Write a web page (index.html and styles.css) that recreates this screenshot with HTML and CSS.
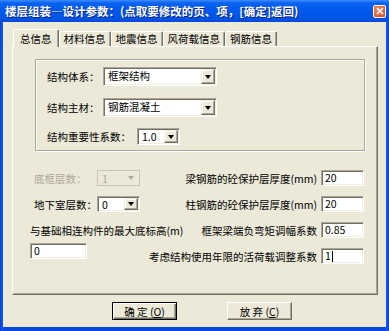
FILE: index.html
```html
<!DOCTYPE html>
<html lang="zh-CN">
  <head>
    <meta charset="UTF-8" />
    <title>楼层组装—设计参数</title>
    <link rel="stylesheet" href="styles.css">
  </head>
  <body>
    <div id="window">
      <div id="titlebar">
        <span id="title">楼层组装—设计参数：(点取要修改的页、项，[确定]返回)</span>
        <span id="close">
          <svg width="8" height="8" viewBox="0 0 8 8">
            <path d="M1 1L7 7M7 1L1 7" stroke="#fff" stroke-width="1.7" />
          </svg>
        </span>
      </div>
      <div id="client">
        <div id="tabs">
          <div class="tab active">总信息</div>
          <div class="tab">材料信息</div>
          <div class="tab">地震信息</div>
          <div class="tab">风荷载信息</div>
          <div class="tab">钢筋信息</div>
        </div>
        <div id="page">
          <div id="group">
            <div class="row">
              <label>结构体系：</label>
              <div class="combo wide"><span class="value">框架结构</span><span class="arrow"></span></div>
            </div>
            <div class="row">
              <label>结构主材：</label>
              <div class="combo wide"><span class="value">钢筋混凝土</span><span class="arrow"></span></div>
            </div>
            <div class="row short">
              <label class="long">结构重要性系数：</label>
              <div class="combo small"><span class="value">1.0</span><span class="arrow"></span></div>
            </div>
          </div>
          <div id="lower">
            <div id="left">
              <div class="lrow">
                <label class="disabled">底框层数：</label>
                <div class="combo small disabled"><span class="value">1</span><span class="arrow"></span></div>
              </div>
              <div class="lrow">
                <label>地下室层数：</label>
                <div class="combo small"><span class="value">0</span><span class="arrow"></span></div>
              </div>
              <div class="lrow outdent">
                <label>与基础相连构件的最大底标高(m)</label>
              </div>
              <div class="edit base">0</div>
            </div>
            <div id="right">
              <div class="rrow">
                <label>梁钢筋的砼保护层厚度(mm)</label>
                <div class="edit">20</div>
              </div>
              <div class="rrow">
                <label>柱钢筋的砼保护层厚度(mm)</label>
                <div class="edit">20</div>
              </div>
              <div class="rrow">
                <label>框架梁端负弯矩调幅系数</label>
                <div class="edit">0.85</div>
              </div>
              <div class="rrow">
                <label>考虑结构使用年限的活荷载调整系数</label>
                <div class="edit">1<span class="caret"></span></div>
              </div>
            </div>
          </div>
        </div>
        <div id="buttons">
          <button type="button" class="default">确 定 (<u>O</u>)</button>
          <button type="button">放 弃 (<u>C</u>)</button>
        </div>
      </div>
    </div>
  </body>
</html>
```

FILE: styles.css
```css
* {
  box-sizing: border-box;
  padding: 0;
  margin: 0;
}

body {
  font-family: "Noto Sans CJK SC", "Noto Sans", sans-serif;
  font-size: 10.5px;
  color: #000;
  background: #fff;
}

#window {
  width: 389px;
  height: 331px;
  background: linear-gradient(90deg, #0831d9, #1660ec 2px, #0a48e0 3px, #0a48e0 386px, #1660ec 387px, #0831d9);
  display: flex;
  flex-direction: column;
}

#titlebar {
  height: 22px;
  display: flex;
  align-items: center;
  justify-content: space-between;
  padding: 0 3px 0 5px;
  background: linear-gradient(#3d8cff, #0a62f0 3px, #0058ee 50%, #0054e3 85%, #0848d6);
}

#title {
  color: #fff;
  font-weight: bold;
  font-size: 11.5px;
  text-shadow: 1px 1px #0a1e8c;
  white-space: nowrap;
}

#close {
  width: 13px;
  height: 13px;
  border: 1px solid #fff;
  border-radius: 2px;
  background: radial-gradient(circle at 35% 35%, #f08a68, #d8461c);
  display: flex;
  align-items: center;
  justify-content: center;
}

#client {
  flex: 1;
  margin: 0 3px 4px;
  background: #ece9d8;
}

/* tabs */

#tabs {
  display: flex;
  align-items: flex-end;
  height: 24px;
  padding-left: 10px;
}

.tab {
  height: 15px;
  padding: 0 4px;
  line-height: 13px;
  border: 1px solid;
  border-color: #fff #716f64 transparent #fff;
  border-bottom: none;
  border-radius: 2px 2px 0 0;
  box-shadow: inset -1px 0 #aca899;
  white-space: nowrap;
}

.tab.active {
  height: 18px;
  margin-bottom: -1px;
  padding: 2px 6px 0;
  background: #ece9d8;
  position: relative;
  z-index: 1;
}

#page {
  margin-left: 9px;
  width: 366px;
  height: 249px;
  border: 1px solid;
  border-color: #fff #716f64 #716f64 #fff;
  box-shadow: inset -1px -1px #aca899;
  padding-top: 12px;
}

/* group box */

#group {
  margin-left: 22px;
  width: 330px;
  height: 92px;
  border: 1px solid #aca899;
  box-shadow: 1px 1px #fff, inset 1px 1px #fff;
  padding: 7px 0 0 11px;
  display: flex;
  flex-direction: column;
  gap: 12px;
}

.row {
  display: flex;
  align-items: center;
  height: 19px;
}

.row label {
  width: 56px;
}

.row label.long {
  width: 90px;
}

.row.short {
  height: 17px;
  margin-top: -1px;
}

/* combo boxes and edits */

.combo {
  height: 19px;
  background: #fff;
  border: 1px solid;
  border-color: #aca899 #fff #fff #aca899;
  box-shadow: inset 1px 1px #716f64, inset -1px -1px #f1efe2;
  display: flex;
  align-items: stretch;
  padding: 1px;
}

.combo.wide {
  width: 114px;
}

.combo.small {
  width: 43px;
  height: 17px;
}

.combo .value {
  flex: 1;
  padding-left: 3px;
  line-height: 14px;
}

.arrow {
  width: 14px;
  background: #ece9d8;
  border: 1px solid;
  border-color: #f1efe2 #716f64 #716f64 #f1efe2;
  box-shadow: inset -1px -1px #aca899, inset 1px 1px #fff;
  display: flex;
  align-items: center;
  justify-content: center;
}

.arrow::after {
  content: "";
  border-left: 3px solid transparent;
  border-right: 3px solid transparent;
  border-top: 4px solid #000;
}

.combo.disabled {
  background: #ece9d8;
  border-color: #c9c5b4;
  box-shadow: none;
}

.combo.disabled .value,
label.disabled {
  color: #aca899;
}

.combo.disabled .arrow {
  border-color: transparent;
  box-shadow: none;
}

.combo.disabled .arrow::after {
  border-top-color: #aca899;
}

.edit {
  height: 16px;
  width: 43px;
  background: #fff;
  border: 1px solid;
  border-color: #aca899 #fff #fff #aca899;
  box-shadow: inset 1px 1px #716f64, inset -1px -1px #f1efe2;
  padding-left: 3px;
  line-height: 14px;
  display: flex;
  align-items: center;
}

.caret {
  width: 1px;
  height: 11px;
  margin-left: 1px;
  background: #000;
}

/* lower part */

#lower {
  display: grid;
  margin-top: 19px;
}

#left,
#right {
  grid-area: 1 / 1;
  display: flex;
  flex-direction: column;
}

#left {
  padding-left: 21px;
}

.lrow {
  display: flex;
  align-items: center;
  height: 16px;
}

.lrow + .lrow {
  margin-top: 10px;
}

.lrow label {
  width: 63px;
}

.lrow .combo.small {
  height: 16px;
}

.lrow.outdent {
  margin-left: -4px;
}

.lrow.outdent label {
  width: auto;
  white-space: nowrap;
}

.edit.base {
  margin: 5px 0 0 -4px;
  width: 57px;
}

#right {
  justify-self: end;
  margin-right: 13px;
  gap: 10px;
}

.rrow {
  display: flex;
  align-items: center;
  justify-content: flex-end;
  gap: 4px;
  height: 16px;
  white-space: nowrap;
}

/* buttons */

#buttons {
  display: flex;
  gap: 50px;
  padding-left: 109px;
  margin-top: 7px;
}

button {
  width: 65px;
  height: 18px;
  font: inherit;
  background: #ece9d8;
  border: 1px solid;
  border-color: #fff #716f64 #716f64 #fff;
  box-shadow: inset -1px -1px #aca899;
}

button.default {
  border-color: #000;
  box-shadow: inset 1px 1px #fff, inset -1px -1px #716f64, inset -2px -2px #aca899;
}
```
